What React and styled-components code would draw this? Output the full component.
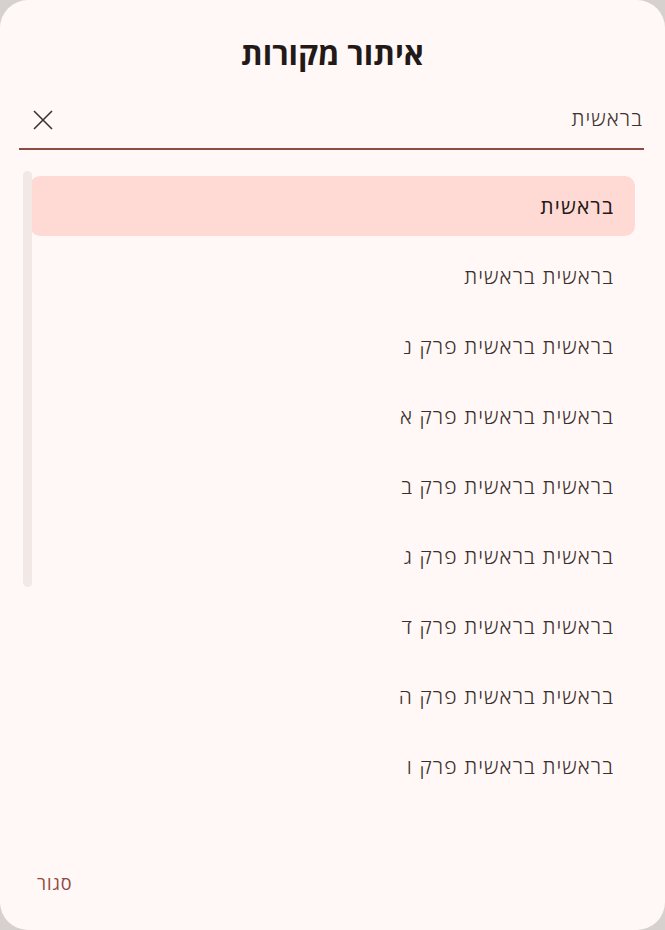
import styled, { createGlobalStyle } from "styled-components"
import { useState } from "react"

const GlobalStyle = createGlobalStyle`
html, body {
  margin: 0;
  padding: 0;
  background: #d6d0ce;
}
* {
  box-sizing: border-box;
}
`

const Dialog = styled.div`
width: 665px;
height: 930px;
background-color: #fff8f6;
border-radius: 28px;
display: flex;
flex-direction: column;
direction: rtl;
font-family: "Open Sans", "Noto Sans", sans-serif;
color: #231918;
overflow: hidden;
`
const Title = styled.h1`
margin: 0;
padding-top: 31px;
height: 92px;
text-align: center;
font-size: 31px;
font-weight: 700;
line-height: 44px;
color: #231918;
`
const SearchRow = styled.div`
margin: 0 21px 0 19px;
height: 58px;
display: flex;
align-items: center;
border-bottom: 2px solid #8f4a42;
padding: 0 1px 4px 12px;
`
const SearchInput = styled.input`
flex: 1;
border: none;
outline: none;
background: transparent;
direction: rtl;
font-family: inherit;
font-size: 21px;
font-weight: 300;
letter-spacing: 1.1px;
color: #3d3230;
padding: 0;
`
const ClearButton = styled.button`
width: 24px;
height: 24px;
margin-top: 4px;
padding: 0;
border: none;
background: transparent;
display: flex;
align-items: center;
justify-content: center;
cursor: pointer;
`
const ListArea = styled.div`
flex: 1;
position: relative;
padding: 26px 30px 0 30px;
`
const List = styled.ul`
list-style: none;
margin: 0;
padding: 0;
display: flex;
flex-direction: column;
gap: 10px;
`
const Item = styled.li`
height: 60px;
border-radius: 10px;
display: flex;
align-items: center;
padding: 0 21px;
font-size: 21px;
letter-spacing: 1.1px;
font-weight: ${props => props.$active ? 400 : 300};
color: ${props => props.$active ? '#231918' : '#3a2f2d'};
background-color: ${props => props.$active ? '#ffdad4' : 'transparent'};
cursor: pointer;
`
const Scrollbar = styled.div`
position: absolute;
left: 23px;
top: 21px;
width: 9px;
height: 416px;
border-radius: 5px;
background-color: #f2e9e7;
`
const Footer = styled.div`
height: 92px;
display: flex;
align-items: center;
justify-content: flex-end;
padding: 0 28px 2px;
`
const CloseButton = styled.button`
border: none;
background: transparent;
font-family: inherit;
font-size: 18px;
font-weight: 500;
letter-spacing: 1px;
color: #904a43;
padding: 6px 9px;
cursor: pointer;
`

const items = [
  "בראשית",
  "בראשית בראשית",
  "בראשית בראשית פרק נ",
  "בראשית בראשית פרק א",
  "בראשית בראשית פרק ב",
  "בראשית בראשית פרק ג",
  "בראשית בראשית פרק ד",
  "בראשית בראשית פרק ה",
  "בראשית בראשית פרק ו",
]

function App() {
  const [query, setQuery] = useState("בראשית")
  const [active, setActive] = useState(0)

  return (
    <>
      <GlobalStyle />
      <Dialog>
        <Title>איתור מקורות</Title>
        <SearchRow>
          <SearchInput value={query} onChange={e => setQuery(e.target.value)} />
          <ClearButton onClick={() => setQuery("")}>
            <svg width="22" height="22" viewBox="0 0 22 22">
              <path d="M2 2 L20 20 M20 2 L2 20" stroke="#3d3230" strokeWidth="1.6" fill="none" />
            </svg>
          </ClearButton>
        </SearchRow>
        <ListArea>
          <Scrollbar />
          <List>
            {items.map((item, i) =>
              <Item key={i} $active={i === active} onClick={() => setActive(i)}>{item}</Item>
            )}
          </List>
        </ListArea>
        <Footer>
          <CloseButton>סגור</CloseButton>
        </Footer>
      </Dialog>
    </>
  )
}

export default App
